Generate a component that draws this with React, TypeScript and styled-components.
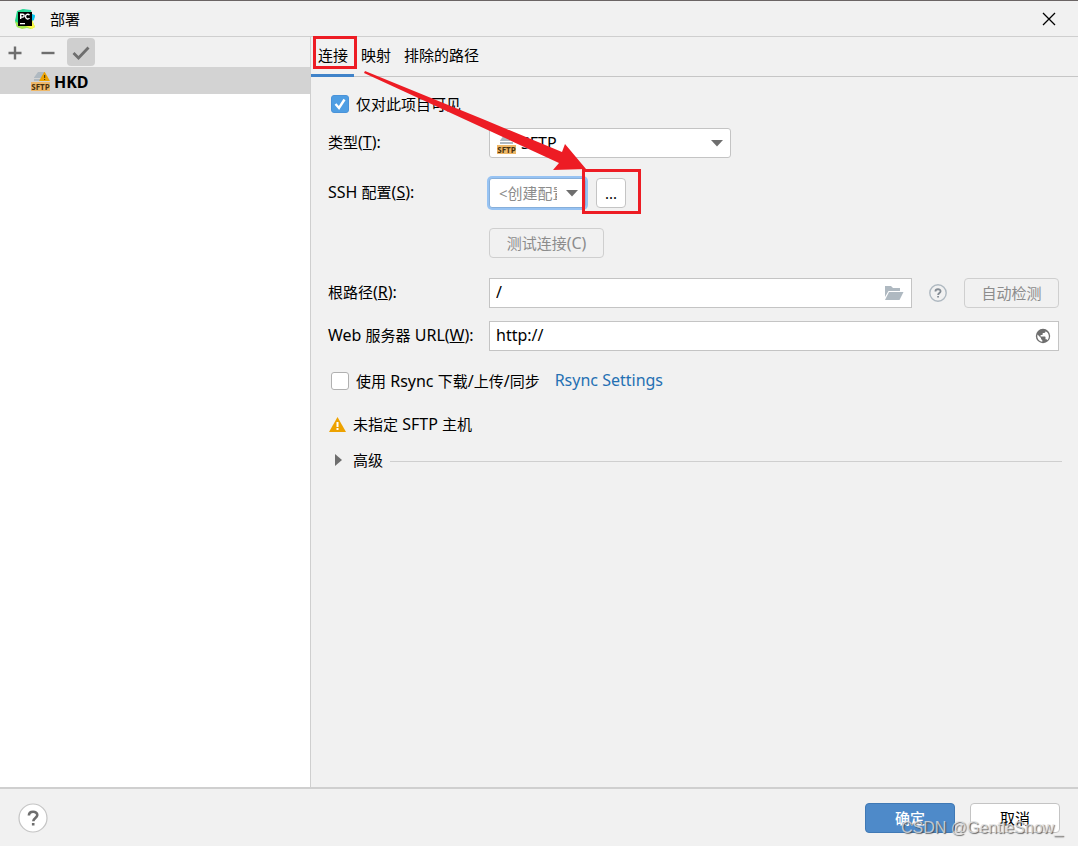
import React from 'react';
import styled, { createGlobalStyle, css } from 'styled-components';

const GlobalStyle = createGlobalStyle`
  * { box-sizing: border-box; }
  body { margin: 0; }
  body, button, input, select {
    font-family: "Noto Sans", "Noto Sans CJK SC", sans-serif;
    font-size: 15px;
    line-height: 20px;
    color: #000;
  }
  svg { display: block; flex: none; }
`;

const Dialog = styled.div`
  position: relative;
  display: flex;
  flex-direction: column;
  min-height: 100vh;
  background: #f1f1f1;
  border-top: 1px solid #6b6565;
`;

const TitleBar = styled.header`
  display: flex;
  align-items: center;
  height: 36px;
  padding: 0 22px 0 14px;
  border-bottom: 1px solid #cfcfcf;
`;

const Title = styled.h1`
  flex: 1;
  margin: 0 0 0 14px;
  font-size: 15px;
  font-weight: 400;
`;

const Latin = styled.span`
  font-size: 16px;
`;

const IconButton = styled.button<{ $active?: boolean }>`
  display: flex;
  align-items: center;
  justify-content: center;
  width: 28px;
  height: 28px;
  padding: 1px 0 0;
  border: 0;
  border-radius: 4px;
  background: ${p => (p.$active ? '#cfcfcf' : 'transparent')};
`;

const CloseButton = styled(IconButton)`
  width: 14px;
  padding: 0;
`;

const Body = styled.div`
  flex: 1;
  display: flex;
`;

const Sidebar = styled.aside`
  flex: none;
  width: 311px;
  background: #fff;
  border-right: 1px solid #cfcfcf;
`;

const Toolbar = styled.div`
  display: flex;
  align-items: center;
  gap: 5px;
  height: 30px;
  padding-left: 1px;
  background: #f1f1f1;
`;

const ServerRow = styled.div`
  display: flex;
  align-items: center;
  gap: 4px;
  height: 27px;
  padding: 2px 0 0 31px;
  background: #d3d3d3;
  font-size: 16px;
  font-weight: 700;
`;

const Main = styled.main`
  flex: 1;
  min-width: 0;
`;

const Tabs = styled.nav`
  display: flex;
  height: 40px;
  border-bottom: 1px solid #c6c6c6;
`;

const Tab = styled.button<{ $active?: boolean }>`
  height: 40px;
  padding: 0 6px 2px 7px;
  border: 0;
  border-bottom: 3px solid ${p => (p.$active ? '#4083c9' : 'transparent')};
  background: none;
`;

const Form = styled.form`
  padding: 17px 19px 0 17px;
`;

const CheckLabel = styled.label`
  display: flex;
  align-items: center;
  gap: 7px;
`;

const CheckRow = styled.div`
  display: flex;
  align-items: center;
  gap: 15px;
  height: 20px;
  padding-left: 3px;
`;

const CheckBox = styled.input`
  appearance: none;
  width: 18px;
  height: 18px;
  margin: 0;
  border: 1px solid #b0b0b0;
  border-radius: 3px;
  background: #fff;
  &:checked {
    border-color: #4a93d9;
    background: #4f9ee3;
  }
`;

const CheckWrap = styled.span`
  position: relative;
  display: flex;
  svg {
    position: absolute;
    inset: 0;
    pointer-events: none;
  }
`;

const Fields = styled.div`
  display: grid;
  grid-template-columns: 161px minmax(0, 1fr);
  align-items: center;
  row-gap: 20px;
  margin-top: 14px;
`;

const TextFields = styled(Fields)`
  row-gap: 13px;
  margin-top: 20px;
`;

const FieldLabel = styled.label`
  padding-bottom: 2px;
  white-space: nowrap;
`;

const Line = styled.div<{ $gap?: number }>`
  grid-column: 2;
  display: flex;
  align-items: center;
  gap: ${p => p.$gap ?? 0}px;
  height: 30px;
`;

const Picker = styled.div<{ $width: number }>`
  position: relative;
  width: ${p => p.$width}px;
  height: 30px;
`;

const Select = styled.select<{ $focused?: boolean; $withIcon?: boolean }>`
  appearance: none;
  width: 100%;
  height: 30px;
  padding: 0 ${p => (p.$focused ? 28 : 30)}px 0 ${p => (p.$withIcon ? 31 : 9)}px;
  border: 1px solid #c4c4c4;
  border-radius: 3px;
  background: #fff;
  font-size: ${p => (p.$withIcon ? 16 : 15)}px;
  overflow: hidden;
  text-overflow: clip;
  ${p =>
    p.$focused &&
    css`
      color: #8c8c8c;
      border-color: #87afda;
      box-shadow: 0 0 0 2px #97c3f3;
    `}
`;

const PickerIcon = styled.span`
  position: absolute;
  left: 8px;
  top: 7px;
  pointer-events: none;
`;

const PickerArrow = styled.span`
  position: absolute;
  right: 8px;
  top: 12px;
  pointer-events: none;
`;

const Button = styled.button<{ $primary?: boolean; $width: number }>`
  flex: none;
  width: ${p => p.$width}px;
  height: 30px;
  padding: 0;
  border: 1px solid ${p => (p.$primary ? '#4079b5' : '#c4c4c4')};
  border-radius: 4px;
  background: ${p => (p.$primary ? '#4e8ac9' : '#fff')};
  color: ${p => (p.$primary ? '#fff' : '#000')};
  font-weight: ${p => (p.$primary ? 500 : 400)};
  &:disabled {
    border-color: #cfcfcf;
    background: #f1f1f1;
    color: #8c8c8c;
  }
`;

const TextBox = styled.div`
  flex: 1;
  display: flex;
  align-items: center;
  height: 30px;
  padding: 0 7px 0 6px;
  border: 1px solid #c4c4c4;
  background: #fff;
`;

const TextInput = styled.input`
  flex: 1;
  min-width: 0;
  padding: 0 0 2px;
  border: 0;
  outline: 0;
  background: none;
  font-size: 16px;
`;

const HelpButton = styled.button<{ $large?: boolean }>`
  flex: none;
  width: ${p => (p.$large ? 30 : 18)}px;
  height: ${p => (p.$large ? 30 : 18)}px;
  padding: 0;
  border: 0;
  background: none;
`;

const RsyncRow = styled(CheckRow)`
  margin-top: 20px;
`;

const Link = styled.a`
  padding-bottom: 2px;
  color: #2470b3;
  font-size: 16px;
  text-decoration: none;
`;

const Warning = styled.p`
  display: flex;
  align-items: center;
  gap: 7px;
  margin: 23px 0 0 1px;
`;

const Advanced = styled.button`
  display: flex;
  align-items: center;
  width: 100%;
  margin-top: 16px;
  padding: 0 0 0 7px;
  border: 0;
  background: none;
  gap: 10px;
`;

const Rule = styled.span`
  flex: 1;
  height: 1px;
  margin: 2px -3px 0 -3px;
  background: #cfcfcf;
`;

const Footer = styled.footer`
  display: flex;
  align-items: center;
  gap: 15px;
  height: 59px;
  padding: 0 18px;
  border-top: 2px solid #cfcfcf;
`;

const Spacer = styled.span`
  flex: 1;
`;

const Annotations = styled.svg`
  position: absolute;
  left: 0;
  top: -1px;
  pointer-events: none;
`;

const Watermark = styled.span`
  position: absolute;
  right: 15px;
  bottom: 8px;
  font-family: "Liberation Sans", sans-serif;
  font-size: 16px;
  color: rgba(225, 225, 225, 0.8);
  text-shadow: 1px 1px 1px rgba(70, 70, 70, 0.8);
  pointer-events: none;
`;

const AppLogo = () => (
  <svg width="22" height="22" viewBox="0 0 22 22" aria-hidden="true">
    <path d="M3 3 9 1l5 2-6 17-5-1-2-6z" fill="#21d789" />
    <path d="m9 1 8 1 1 4 3 2-2 5-5-1z" fill="#2bd9a0" />
    <path d="m17 6 4 1-1 5-3 1z" fill="#07c3f2" />
    <path d="m1 13 6 4 11-5 3 7-4 2-4-1-5 1-5-2z" fill="#a6e84b" />
    <path d="m9 17 9-5 3 7-3 2-4-2z" fill="#fcf84a" />
    <path d="M4 4h14v14H4z" fill="#000" />
    <path d="M6.7 11V6.2h2a1.4 1.4 0 0 1 0 2.9h-2M15.5 7.1c-1.300-1.500-4-.9-4 1.500s2.700 3 4 1.500" fill="none" stroke="#fff" strokeWidth="1.400" />
    <path d="M6 15h5v1.300H6z" fill="#fff" />
  </svg>
);

const ServerIcon = ({ warning }: { warning?: boolean }) => (
  <svg width="19" height="19" viewBox="0 0 19 19" aria-hidden="true">
    <path d="M3 5.500 7 0h6v6H3zM3 7h13v2H3z" fill="#afb9c1" />
    {warning && (
      <>
        <path d="m13.500-.5 5.500 9.500H8z" fill="#eda200" />
        <path d="M13 3h1.200v3H13zM13 7h1.200v1H13z" fill="#5c4000" />
      </>
    )}
    <path d="M0 10h19v9H0z" fill="#eeb868" />
    <text x="9.500" y="17.500" textAnchor="middle" fontFamily="Open Sans, sans-serif" fontSize="8" fontWeight="700" fill="#46310f">
      SFTP
    </text>
  </svg>
);

const DownArrow = () => (
  <svg width="12" height="7" viewBox="0 0 12 7" aria-hidden="true">
    <path d="M0 0h12L6 6.500z" fill="#6e6e6e" />
  </svg>
);

const Tick = () => (
  <svg width="18" height="18" viewBox="0 0 18 18" aria-hidden="true">
    <path d="m4.500 9 3.500 4 5.500-8.500" fill="none" stroke="#fff" strokeWidth="2.400" />
  </svg>
);

const Question = ({ large }: { large?: boolean }) => (
  <svg width={large ? 30 : 18} height={large ? 30 : 18} viewBox={large ? '0 0 30 30' : '6 6 18 18'} aria-hidden="true">
    <circle cx="15" cy="15" r={large ? 14 : 8.2} fill={large ? '#fff' : 'none'} stroke={large ? '#c4c4c4' : '#afb9c1'} strokeWidth={large ? 1.2 : 1.4} />
    <path
      d="M10.900 12.600c0-5 8.400-4.900 8.400-.5 0 2.800-4 3-4 6.100M15.200 20v2.400"
      transform={large ? undefined : 'translate(5.800 5.900) scale(.61)'}
      fill="none"
      stroke={large ? '#6e6e6e' : '#848c94'}
      strokeWidth={large ? 2.6 : 3}
    />
  </svg>
);

const Folder = () => (
  <svg width="20" height="16" viewBox="0 0 20 16" aria-hidden="true">
    <path d="M1 12V1h6l2 2h7v3H4.500z" fill="#afb9c1" />
    <path d="M5 7h14.500L15.500 15H1z" fill="#afb9c1" />
  </svg>
);

const Globe = () => (
  <svg width="16" height="16" viewBox="0 0 16 16" aria-hidden="true">
    <circle cx="8" cy="8" r="7.200" fill="#6e6e6e" />
    <path
      d="M2.500 6.500 6 10v1l1.300 1.200v1.600C4 13.400 1.600 10.200 2.500 6.500zM12.500 12.200c-.2-.6-.7-1-1.300-1h-.7V9.100c0-.4-.3-.7-.7-.7H5.600V7H7c.4 0 .7-.3.7-.7V4.900h1.400c.8 0 1.400-.6 1.400-1.400v-.3c3.500 1.500 4.500 6 2 9z"
      fill="#fff"
    />
  </svg>
);

export default function App() {
  return (
    <Dialog>
      <GlobalStyle />
      <TitleBar>
        <AppLogo />
        <Title>部署</Title>
        <CloseButton type="button" aria-label="关闭">
          <svg width="14" height="14" viewBox="0 0 14 14" aria-hidden="true">
            <path d="m1 1 12 12M13 1 1 13" stroke="#000" strokeWidth="1.300" />
          </svg>
        </CloseButton>
      </TitleBar>

      <Body>
        <Sidebar>
          <Toolbar>
            <IconButton type="button" aria-label="添加">
              <svg width="14" height="14" viewBox="0 0 14 14" aria-hidden="true">
                <path d="M7 .5v13M.5 7h13" stroke="#6e6e6e" strokeWidth="2.400" />
              </svg>
            </IconButton>
            <IconButton type="button" aria-label="移除">
              <svg width="14" height="14" viewBox="0 0 14 14" aria-hidden="true">
                <path d="M.5 7h13" stroke="#6e6e6e" strokeWidth="2.400" />
              </svg>
            </IconButton>
            <IconButton type="button" aria-label="设为默认" $active>
              <svg width="18" height="14" viewBox="0 0 18 14" aria-hidden="true">
                <path d="m1.500 7 5 5L16.500 1.500" fill="none" stroke="#6e6e6e" strokeWidth="2.800" />
              </svg>
            </IconButton>
          </Toolbar>
          <ServerRow>
            <ServerIcon warning />
            HKD
          </ServerRow>
        </Sidebar>

        <Main>
          <Tabs>
            <Tab type="button" $active>连接</Tab>
            <Tab type="button">映射</Tab>
            <Tab type="button">排除的路径</Tab>
          </Tabs>

          <Form>
            <CheckRow>
              <CheckLabel>
                <CheckWrap>
                  <CheckBox type="checkbox" defaultChecked />
                  <Tick />
                </CheckWrap>
                仅对此项目可见
              </CheckLabel>
            </CheckRow>

            <Fields>
              <FieldLabel htmlFor="type">类型<Latin>(<u>T</u>):</Latin></FieldLabel>
              <Line>
                <Picker $width={242}>
                  <Select id="type" $withIcon>
                    <option>SFTP</option>
                  </Select>
                  <PickerIcon><ServerIcon /></PickerIcon>
                  <PickerArrow><DownArrow /></PickerArrow>
                </Picker>
              </Line>
              <FieldLabel htmlFor="ssh"><Latin>SSH </Latin>配置<Latin>(<u>S</u>):</Latin></FieldLabel>
              <Line $gap={10}>
                <Picker $width={97}>
                  <Select id="ssh" $focused>
                    <option>&lt;创建配置&gt;</option>
                  </Select>
                  <PickerArrow><DownArrow /></PickerArrow>
                </Picker>
                <Button type="button" $width={30}>...</Button>
              </Line>
              <Line>
                <Button type="button" $width={115} disabled>测试连接<Latin>(C)</Latin></Button>
              </Line>
            </Fields>

            <TextFields>
              <FieldLabel htmlFor="root-path">根路径<Latin>(<u>R</u>):</Latin></FieldLabel>
              <Line $gap={17}>
                <TextBox>
                  <TextInput id="root-path" defaultValue="/" />
                  <Folder />
                </TextBox>
                <HelpButton type="button" aria-label="根路径帮助"><Question /></HelpButton>
                <Button type="button" $width={95} disabled>自动检测</Button>
              </Line>
              <FieldLabel htmlFor="web-url"><Latin>Web </Latin>服务器<Latin> URL(<u>W</u>):</Latin></FieldLabel>
              <Line>
                <TextBox>
                  <TextInput id="web-url" defaultValue="http://" />
                  <Globe />
                </TextBox>
              </Line>
            </TextFields>

            <RsyncRow>
              <CheckLabel>
                <CheckBox type="checkbox" />
                <span>使用<Latin> Rsync </Latin>下载<Latin>/</Latin>上传<Latin>/</Latin>同步</span>
              </CheckLabel>
              <Link href="#rsync">Rsync Settings</Link>
            </RsyncRow>

            <Warning>
              <svg width="17" height="15" viewBox="0 0 17 15" aria-hidden="true">
                <path d="M8.500 0 17 15H0z" fill="#eda200" />
                <path d="M7.500 5h2v5h-2zM7.500 11h2v2h-2z" fill="#fff" />
              </svg>
              <span>未指定<Latin> SFTP </Latin>主机</span>
            </Warning>

            <Advanced type="button" aria-expanded="false">
              <svg width="8" height="12" viewBox="0 0 8 12" aria-hidden="true">
                <path d="M0 0v12l7-6z" fill="#6e6e6e" />
              </svg>
              高级
              <Rule />
            </Advanced>
          </Form>
        </Main>
      </Body>

      <Footer>
        <HelpButton type="button" aria-label="帮助" $large><Question large /></HelpButton>
        <Spacer />
        <Button type="button" $width={90} $primary>确定</Button>
        <Button type="button" $width={90}>取消</Button>
      </Footer>

      <Annotations width="660" height="220" viewBox="0 0 660 220" aria-hidden="true">
        <path d="M314.500 37.500h41v30h-41zM583.500 170.500h56v42h-56z" fill="none" stroke="#ed1c24" strokeWidth="3" />
        <path d="m365 71 120 49 77 32 3-8 21 25-33 1 6-7-93-43-102-47z" fill="#ed1c24" />
      </Annotations>
      <Watermark>CSDN @GentleSnow_</Watermark>
    </Dialog>
  );
}
